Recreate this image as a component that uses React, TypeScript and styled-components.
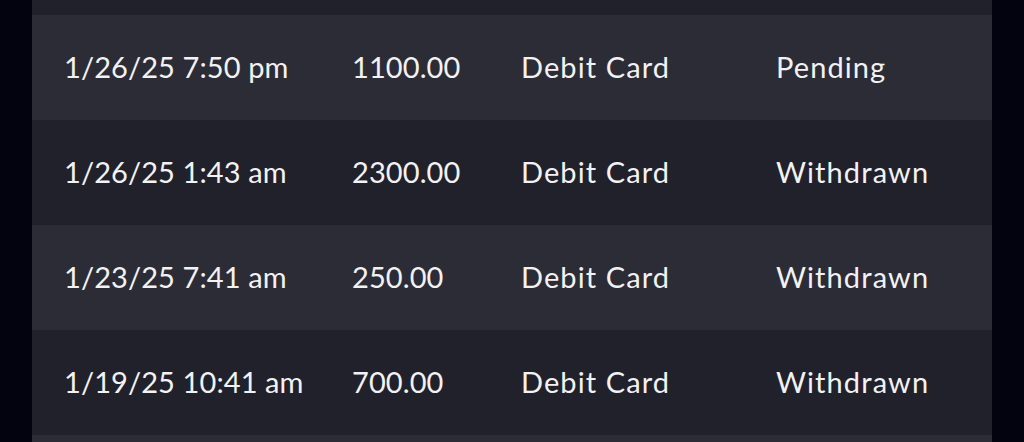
import styled, { createGlobalStyle } from "styled-components";

const GlobalStyle = createGlobalStyle`
  html, body {
    margin: 0;
    padding: 0;
    background: #03030f;
  }
  body {
    font-family: Lato, "Noto Sans", sans-serif;
    overflow: hidden;
  }
`;

const Page = styled.main`
  width: 1024px;
  height: 442px;
  padding: 0 32px;
  box-sizing: border-box;
  background: #03030f;
  overflow: hidden;
`;

const Table = styled.div`
  display: flex;
  flex-direction: column;
  margin-top: -90px;
`;

const Row = styled.div<{ $light: boolean }>`
  display: grid;
  grid-template-columns: 288px 169px 255px 1fr;
  align-items: center;
  height: 105px;
  padding-left: 32px;
  background: ${(p) => (p.$light ? "#2c2c37" : "#21212c")};
`;

const Cell = styled.span<{ $wide?: boolean }>`
  color: #f2f2f4;
  font-size: 29px;
  font-weight: 400;
  letter-spacing: ${(p) => (p.$wide ? "1.1px" : "0.1px")};
  white-space: nowrap;
  margin-top: -2px;
`;

type Txn = { date: string; amount: string; method: string; status: string };

const rows: Txn[] = [
  { date: "", amount: "", method: "", status: "" },
  { date: "1/26/25 7:50 pm", amount: "1100.00", method: "Debit Card", status: "Pending" },
  { date: "1/26/25 1:43 am", amount: "2300.00", method: "Debit Card", status: "Withdrawn" },
  { date: "1/23/25 7:41 am", amount: "250.00", method: "Debit Card", status: "Withdrawn" },
  { date: "1/19/25 10:41 am", amount: "700.00", method: "Debit Card", status: "Withdrawn" },
  { date: "", amount: "", method: "", status: "" },
];

const App = () => {
  return (
    <>
      <GlobalStyle />
      <Page>
        <Table>
          {rows.map((r, i) => (
            <Row key={i} $light={i % 2 === 1}>
              <Cell>{r.date}</Cell>
              <Cell>{r.amount}</Cell>
              <Cell $wide>{r.method}</Cell>
              <Cell $wide>{r.status}</Cell>
            </Row>
          ))}
        </Table>
      </Page>
    </>
  );
};

export default App;
